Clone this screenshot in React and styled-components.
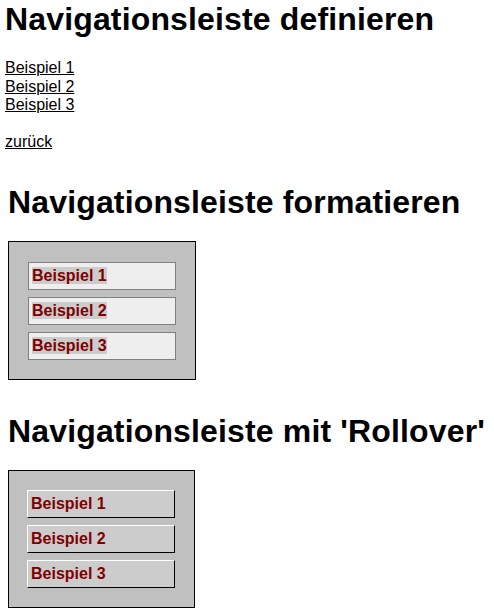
import styled, { createGlobalStyle } from 'styled-components'

const GlobalStyle = createGlobalStyle`
  body {
    margin: 0;
    background: #fff;
    font-family: "Liberation Sans", Arial, sans-serif;
    color: #000;
  }
`

const Page = styled.div`
  padding: 1px 0 0 5px;
`

const Section = styled.section`
  margin-left: ${(p) => (p.$indent ? '3px' : '0')};
`

const Heading = styled.h1`
  margin: 0 0 ${(p) => p.$gap || '20px'};
  font-size: 32px;
  font-weight: bold;
  line-height: 37px;
  letter-spacing: 0.15px;
`

const LinkList = styled.div`
  display: flex;
  flex-direction: column;
  font-size: 16px;
  line-height: 18.6px;
`

const PlainLink = styled.a`
  color: #000;
  text-decoration: underline;
  align-self: flex-start;
`

const Back = styled.p`
  margin: 18px 0 33px;
  font-size: 16px;
  line-height: 18.4px;
`

const NavBox = styled.nav`
  display: flex;
  flex-direction: column;
  gap: 7px;
  background: #c0c0c0;
  border: 1px solid #000;
  width: 148px;
  padding: ${(p) => (p.$rollover ? '19px 19px 19px 18px' : '20px 19px 19px')};
  margin-bottom: ${(p) => p.$mb || '0'};
`

const NavItem = styled.div`
  box-sizing: border-box;
  height: 28px;
  padding: 4px 3px;
  border: 1px solid;
  border-color: ${(p) => (p.$rollover ? '#fff #000 #000 #fff' : '#808080')};
  background: ${(p) => (p.$rollover ? '#cccccc' : '#eeeeee')};
  font-size: 16px;
  line-height: 18px;
  font-weight: bold;
`

const NavLink = styled.a`
  color: #800000;
  text-decoration: none;
  background: ${(p) => (p.$rollover ? 'transparent' : '#cccccc')};
`

const items = ['Beispiel 1', 'Beispiel 2', 'Beispiel 3']

const Nav = ({ rollover, mb }) => (
  <NavBox $rollover={rollover} $mb={mb}>
    {items.map((t) => (
      <NavItem key={t} $rollover={rollover}>
        <NavLink href="#" $rollover={rollover}>{t}</NavLink>
      </NavItem>
    ))}
  </NavBox>
)

export default function App() {
  return (
    <Page>
      <GlobalStyle />
      <Section>
        <Heading $gap="21px">Navigationsleiste definieren</Heading>
        <LinkList>
          {items.map((t) => (
            <PlainLink key={t} href="#">{t}</PlainLink>
          ))}
        </LinkList>
        <Back>
          <PlainLink href="#">zurück</PlainLink>
        </Back>
      </Section>
      <Section $indent>
        <Heading>Navigationsleiste formatieren</Heading>
        <Nav mb="33px" />
        <Heading>Navigationsleiste mit 'Rollover'</Heading>
        <Nav rollover />
      </Section>
    </Page>
  )
}
